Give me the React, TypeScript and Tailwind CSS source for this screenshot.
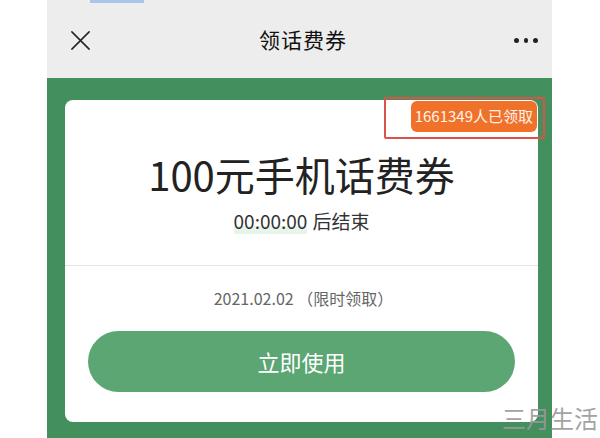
import React from "react";

const font = { fontFamily: '"Noto Sans CJK SC", "Noto Sans", sans-serif' };

export default function App() {
  return (
    <div className="w-[600px] h-[438px] bg-white overflow-hidden relative" style={font}>
      <div className="absolute left-[90px] top-0 w-[54px] h-[3px] bg-[#a9c6ea]" />
      <div className="ml-[47px] w-[505px] h-[438px] flex flex-col">
        {/* header */}
        <div className="h-[78px] bg-[#ededed] flex items-center justify-between pl-[22px] pr-[14px] pt-[2px]">
          <svg width="23" height="23" viewBox="0 0 24 24" fill="none" stroke="#222" strokeWidth="1.6" strokeLinecap="round">
            <path d="M3 3L21 21M21 3L3 21" />
          </svg>
          <div className="text-[21px] text-[#111] tracking-[1px]">领话费券</div>
          <div className="flex gap-[5px] w-[24px]">
            <span className="w-[5px] h-[5px] rounded-full bg-[#222]" />
            <span className="w-[5px] h-[5px] rounded-full bg-[#222]" />
            <span className="w-[5px] h-[5px] rounded-full bg-[#222]" />
          </div>
        </div>
        {/* green area */}
        <div className="flex-1 bg-[#438f5e] pt-[22px] pl-[18px] pr-[14px]">
          <div className="relative bg-white rounded-[8px] h-[322px] flex flex-col">
            <div className="absolute right-[1px] top-[1px] h-[31px] px-[4px] bg-[#f0722a] rounded-[6px] flex items-center text-[#fff3ea] text-[15px]">
              1661349人已领取
            </div>
            <div className="absolute -right-[7px] -top-[3px] w-[161px] h-[42px] border-2 border-[#d9534a] rounded-[2px]" />
            <div className="h-[166px] flex flex-col items-center pt-[50px] border-b border-[#e3e3e3]">
              <div className="text-[40px] leading-[48px] text-[#222]">100元手机话费券</div>
              <div className="mt-[10px] text-[19px] leading-[26px] text-[#333] flex items-center gap-[5px]">
                <span className="bg-[linear-gradient(transparent_70%,#e6f4ea_70%)]">00:00:00</span>
                <span>后结束</span>
              </div>
            </div>
            <div className="text-center text-[16px] text-[#666] mt-[21px] leading-[22px] pl-[4px]">2021.02.02 （限时领取）</div>
            <div className="mx-[23px] mt-[22px] h-[61px] rounded-full bg-[#5ba673] flex items-center justify-center text-white text-[22px]">
              立即使用
            </div>
          </div>
        </div>
      </div>
      <div className="absolute right-[2px] bottom-[6px] text-[#9a9a9a] text-[24px] leading-[28px] opacity-90">三月生活</div>
    </div>
  );
}
